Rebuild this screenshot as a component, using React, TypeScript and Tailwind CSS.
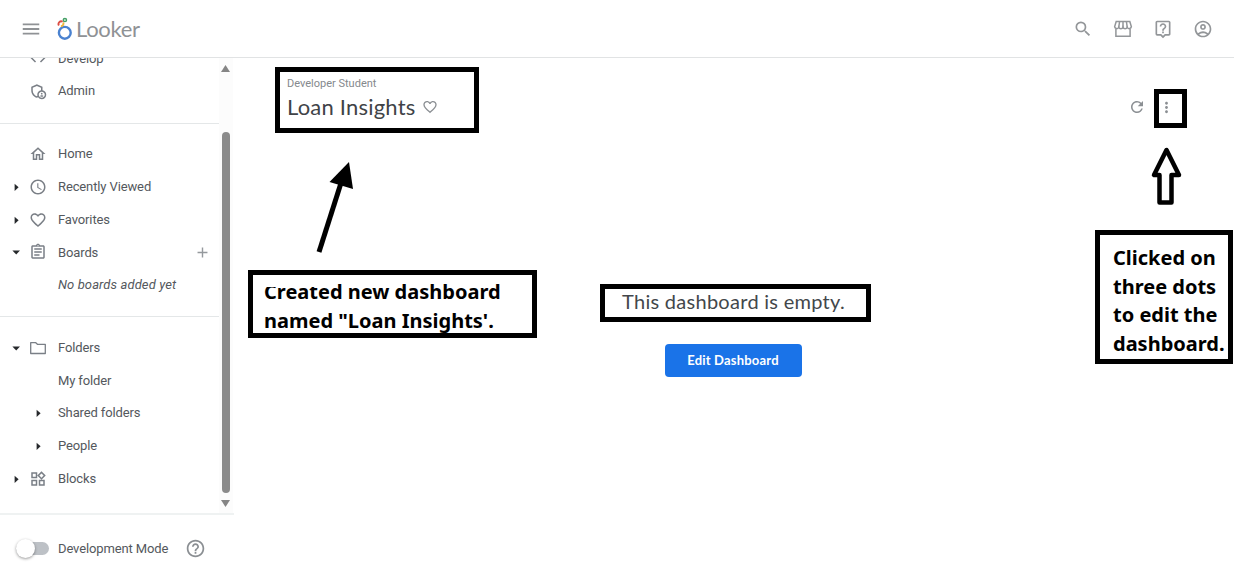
import type { ReactNode } from "react";
import {
  MdAccessTime,
  MdAdd,
  MdCode,
  MdFavoriteBorder,
  MdHelpOutline,
  MdMenu,
  MdMoreVert,
  MdOutlineAccountCircle,
  MdOutlineAdminPanelSettings,
  MdOutlineAssignment,
  MdOutlineHome,
  MdOutlineLiveHelp,
  MdOutlineWidgets,
  MdRefresh,
  MdSearch,
} from "react-icons/md";

function Logo() {
  return (
    <svg width="17" height="24" viewBox="0 0 17 24" fill="none">
      <circle cx="7.8" cy="15.8" r="5.900" stroke="#4a82d0" strokeWidth="2.400" />
      <circle cx="7.900" cy="3" r="1.600" stroke="#45a066" strokeWidth="1.500" />
      <path d="M1.900 8.400A2.700 2.700 0 0 1 5.600 4.700" stroke="#dc4d43" strokeWidth="1.900" />
      <path d="M6.200 5.500a2.600 2.600 0 0 1-2.300 3.800" stroke="#efb73e" strokeWidth="1.900" />
    </svg>
  );
}

function StoreIcon() {
  return (
    <svg width="20" height="20" viewBox="0 0 20 20" fill="none" stroke="#939699" strokeWidth="1.5">
      <path d="M3.2 2.5h13.6l1.6 5.2a2.2 2.2 0 0 1-4.2.6 2.2 2.2 0 0 1-4.2 0 2.2 2.2 0 0 1-4.2 0 2.2 2.2 0 0 1-4.2-.6z" />
      <path d="M6.6 2.5 5.8 8M10 2.5V8M13.4 2.5l.8 5.5M2.9 9.8v7.4h14.2V9.8" />
    </svg>
  );
}

function FolderIcon() {
  return (
    <svg width="18" height="18" viewBox="0 0 18 18" fill="none" stroke="#7a7f86" strokeWidth="1.3" strokeLinejoin="round">
      <path d="M1.700 3.700h5.100l1.600 1.600h7.900v9.200H1.700z" />
    </svg>
  );
}

function Caret({ open }: { open?: boolean }) {
  return (
    <svg width="8" height="8" viewBox="0 0 8 8" fill="#26292c">
      <path d={open ? "M0.4 2.4h7.600L4.200 6.400z" : "M2.600 0.700v7.200L6.600 4.300z"} />
    </svg>
  );
}

type RowProps = {
  label: string;
  icon?: ReactNode;
  caret?: "open" | "closed";
  nested?: boolean;
  action?: ReactNode;
};

function Row({ label, icon, caret, nested, action }: RowProps) {
  const arrow = caret ? <Caret open={caret === "open"} /> : null;
  return (
    <div className="flex h-[32.8px] items-center">
      <div className="flex w-[22px] justify-end pr-[2px]">{nested ? null : arrow}</div>
      <div className="flex w-[36px] justify-start pl-[7px] text-[18px] text-[#7a7f86]">
        <span className="flex w-[18px] justify-center">{nested ? arrow : icon}</span>
      </div>
      <span className="flex-1 tracking-[-0.12px] whitespace-nowrap">{label}</span>
      {action}
    </div>
  );
}

function Sidebar() {
  return (
    <aside className="flex w-[234px] shrink-0 flex-col text-[13px] text-[#54585d]">
      <div className="flex h-[457px] overflow-hidden border-b-2 border-[#eff2f2]">
        <nav className="w-[219px]">
          <div className="-mt-[16px] h-[82px] border-b border-[#e4e7e8]">
            <Row label="Develop" icon={<MdCode />} />
            <Row label="Admin" icon={<MdOutlineAdminPanelSettings />} />
          </div>
          <div className="h-[193px] border-b border-[#e4e7e8] pt-[13.600px]">
            <Row label="Home" icon={<MdOutlineHome />} />
            <Row label="Recently Viewed" caret="closed" icon={<MdAccessTime />} />
            <Row label="Favorites" caret="closed" icon={<MdFavoriteBorder />} />
            <Row
              label="Boards"
              caret="open"
              icon={<MdOutlineAssignment />}
              action={<MdAdd className="mr-[8px] text-[17px] text-[#95999d]" />}
            />
            <div className="pl-[58px] leading-[32px] tracking-[0.1px] italic">No boards added yet</div>
          </div>
          <div className="pt-[14.200px]">
            <Row label="Folders" caret="open" icon={<FolderIcon />} />
            <Row label="My folder" nested />
            <Row label="Shared folders" caret="closed" nested />
            <Row label="People" caret="closed" nested />
            <Row label="Blocks" caret="closed" icon={<MdOutlineWidgets />} />
          </div>
        </nav>
        <div className="flex w-[14px] flex-col items-center bg-[#fcfcfc] pt-[7px] pr-[1px]">
          <svg width="9" height="7" viewBox="0 0 9 7" fill="#858585">
            <path d="M4.5 0 9 7H0z" />
          </svg>
          <div className="mt-[60px] h-[361px] w-[8px] shrink-0 rounded-full bg-[#8b8b8b]" />
          <svg className="mt-[7px]" width="9" height="7" viewBox="0 0 9 7" fill="#858585">
            <path d="M0 0h9L4.5 7z" />
          </svg>
        </div>
      </div>
      <div className="flex h-[67px] items-center pl-[16px]">
        <div className="flex h-[13px] w-[33px] items-center rounded-full bg-[#bdc1c6]">
          <div className="size-[19px] shrink-0 rounded-full bg-white shadow-[0_1px_3px_rgba(0,0,0,0.4)]" />
        </div>
        <span className="ml-[9px] w-[127px] tracking-[-0.12px] whitespace-nowrap">Development Mode</span>
        <MdHelpOutline className="text-[21px] text-[#8b8f93]" />
      </div>
    </aside>
  );
}

function Header() {
  return (
    <header className="flex h-[58px] shrink-0 items-center justify-between border-b border-[#e1e3e4] pr-[21px] pl-[20px]">
      <div className="flex items-center">
        <MdMenu className="text-[22px] text-[#8f9295]" />
        <div className="ml-[15px] flex items-center">
          <Logo />
          <span className="ml-[2px] font-['Lato'] text-[22px] leading-6 tracking-[-0.3px] text-[#8f9295]">Looker</span>
        </div>
      </div>
      <div className="flex items-center gap-[20px] text-[20px] text-[#939699]">
        <MdSearch />
        <StoreIcon />
        <MdOutlineLiveHelp />
        <MdOutlineAccountCircle />
      </div>
    </header>
  );
}

function Dashboard() {
  return (
    <main className="flex w-[1000px] flex-col">
      <div className="flex h-[75px] justify-between pt-[9px] pr-[47px] pl-[41px]">
        <div className="h-[66px] w-[204px] border-5 border-black pt-[5px] pl-[7px]">
          <div className="text-[11px] leading-[13px] text-[#85898d]">Developer Student</div>
          <div className="mt-[1px] flex items-center">
            <h1 className="w-[135px] font-['Lato'] text-[22px] leading-[32px] tracking-[0.2px] whitespace-nowrap text-[#3f4347]">
              Loan Insights
            </h1>
            <MdFavoriteBorder className="text-[16px] text-[#8b8f93]" />
          </div>
        </div>
        <div className="mt-[22px] flex h-[39px] items-center">
          <MdRefresh className="mr-[8px] mb-[3px] text-[18px] text-[#8b8f93]" />
          <div className="flex h-[39px] w-[33px] items-center border-5 border-black">
            <MdMoreVert className="mb-[2px] ml-[-1px] text-[17px] text-[#8b8f93]" />
          </div>
        </div>
      </div>
      <div className="mt-[151px] flex flex-col items-center pl-[3px]">
        <div className="flex h-[38px] w-[271px] items-center justify-center border-5 border-black pr-[4px] pb-[5px] font-['Lato'] text-[20px] tracking-[0.28px] whitespace-nowrap text-[#43474b]">
          This dashboard is empty.
        </div>
        <button className="mt-[22px] mr-[5px] h-[33px] w-[137px] rounded-[4px] bg-[#1a73e8] font-['Lato'] text-[13px] font-bold tracking-[0.2px] whitespace-nowrap text-white">
          Edit Dashboard
        </button>
      </div>
    </main>
  );
}

function Annotations() {
  return (
    <>
      <svg className="absolute top-[160px] left-[310px]" width="50" height="96" viewBox="0 0 50 96">
        <path d="M9 92 31 23" stroke="#000" strokeWidth="5" />
        <path d="M39 2 43 29 19.500 22z" />
      </svg>
      <div className="absolute top-[270px] left-[248px] h-[68px] w-[289px] overflow-hidden border-5 border-black bg-white pl-[11px] text-[20px] leading-[29px] font-bold whitespace-nowrap text-black">
        <div className="pt-[2px] font-['Noto_Sans']">
          <div>Created new dashboard</div>
          <div>named "Loan Insights'.</div>
        </div>
        <div className="absolute top-0 left-[11px] h-[12px] w-[62px] bg-white" />
      </div>
      <svg className="absolute top-[145px] left-[1149px]" width="36" height="62" viewBox="0 0 36 62">
        <path d="M17.500 5 5 30H10.500V57.500H22.500V30H30z" fill="#fff" stroke="#000" strokeWidth="4.500" strokeLinejoin="round" />
      </svg>
      <div className="absolute top-[230px] left-[1095px] h-[134px] w-[138px] border-5 border-black bg-white pt-[9px] pl-[13px] font-['Noto_Sans'] text-[20px] leading-[28.700px] font-bold whitespace-nowrap text-black">
        <div>Clicked on</div>
        <div>three dots</div>
        <div>to edit the</div>
        <div>dashboard.</div>
      </div>
    </>
  );
}

export default function App() {
  return (
    <div className="relative flex h-[583px] w-[1234px] flex-col overflow-hidden bg-white font-['Roboto',sans-serif]">
      <Header />
      <div className="flex flex-1">
        <Sidebar />
        <Dashboard />
      </div>
      <Annotations />
    </div>
  );
}
